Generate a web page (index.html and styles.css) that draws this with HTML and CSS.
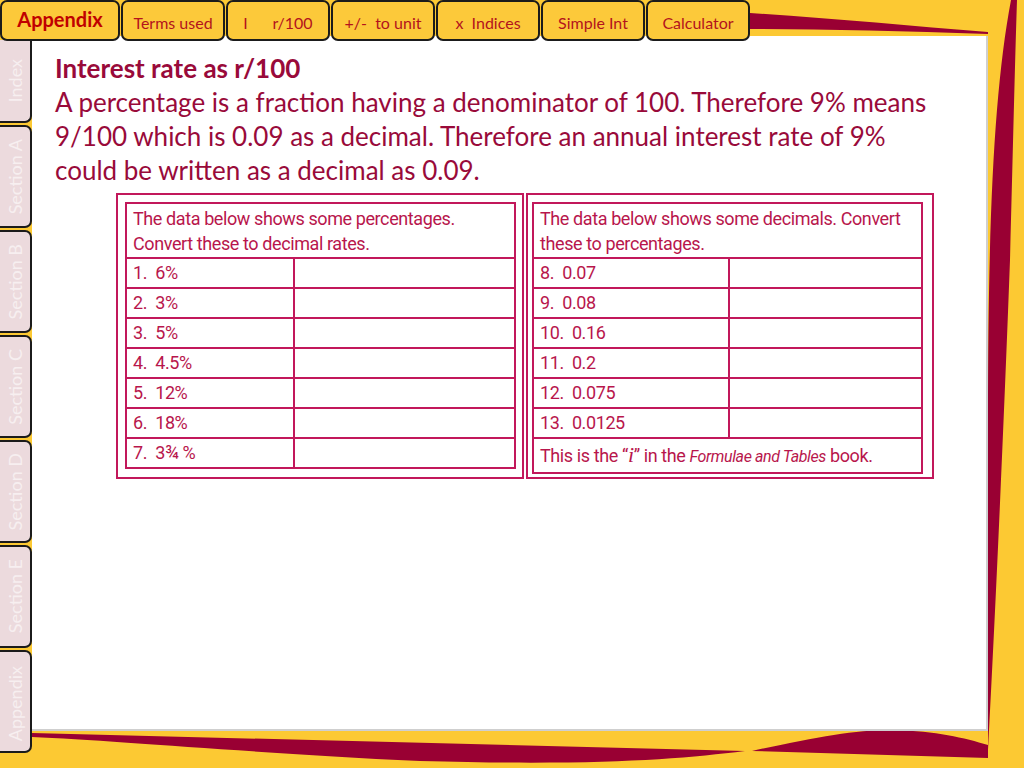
FILE: index.html
```html
<!DOCTYPE html>
<html>
<head>
<meta charset="utf-8">
<title>Interest rate as r/100</title>
<link rel="stylesheet" href="styles.css">
</head>
<body>
<div class="page">
  <svg class="deco" width="1024" height="768" viewBox="0 0 1024 768" aria-hidden="true">
    <path d="M750,13 C830,18 910,26 988,32 L988,34 C900,31 820,29 750,29 Z" fill="#990033"/>
    <path d="M1011,0 C994,90 988,220 988,420 L988,750 C996,600 1004,420 1010,260 C1013,150 1015,60 1017,0 Z" fill="#990033"/>
    <path d="M32,733 L745,751 C680,759 600,766 420,761 C250,753 110,740 32,737 Z" fill="#990033"/>
    <path d="M752,751 C815,737 860,729 895,730 C935,731 965,738 988,745 L988,758 Z" fill="#990033"/>
  </svg>

  <nav class="toptabs">
    <div class="ttab main">Appendix</div>
    <div class="ttab">Terms used</div>
    <div class="ttab pre">I      r/100</div>
    <div class="ttab pre">+/-  to unit</div>
    <div class="ttab pre">x  Indices</div>
    <div class="ttab">Simple Int</div>
    <div class="ttab">Calculator</div>
  </nav>

  <div class="body">
    <aside class="sidetabs">
      <div class="stab s1"><span>Index</span></div>
      <div class="stab"><span>Section A</span></div>
      <div class="stab"><span>Section B</span></div>
      <div class="stab"><span>Section C</span></div>
      <div class="stab"><span>Section D</span></div>
      <div class="stab"><span>Section E</span></div>
      <div class="stab last"><span>Appendix</span></div>
    </aside>

    <main class="panel">
      <h1 class="title">Interest rate as r/100</h1>
      <p class="text">A percentage is a fraction having a denominator of 100. Therefore 9% means 9/100 which is 0.09 as a decimal. Therefore an annual interest rate of 9% could be written as a decimal as 0.09.</p>

      <div class="tables">
        <div class="frame left">
          <table class="grid">
            <tr class="hdr"><td colspan="2">The data below shows some percentages.<br>Convert these to decimal rates.</td></tr>
            <tr><td class="q">1.&nbsp; 6%</td><td></td></tr>
            <tr><td class="q">2.&nbsp; 3%</td><td></td></tr>
            <tr><td class="q">3.&nbsp; 5%</td><td></td></tr>
            <tr><td class="q">4.&nbsp; 4.5%</td><td></td></tr>
            <tr><td class="q">5.&nbsp; 12%</td><td></td></tr>
            <tr><td class="q">6.&nbsp; 18%</td><td></td></tr>
            <tr><td class="q">7.&nbsp; 3¾ %</td><td></td></tr>
          </table>
        </div>
        <div class="frame right">
          <table class="grid">
            <tr class="hdr"><td colspan="2">The data below shows some decimals. Convert<br>these to percentages.</td></tr>
            <tr><td class="q">8.&nbsp; 0.07</td><td></td></tr>
            <tr><td class="q">9.&nbsp; 0.08</td><td></td></tr>
            <tr><td class="q">10.&nbsp; 0.16</td><td></td></tr>
            <tr><td class="q">11.&nbsp; 0.2</td><td></td></tr>
            <tr><td class="q">12.&nbsp; 0.075</td><td></td></tr>
            <tr><td class="q">13.&nbsp; 0.0125</td><td></td></tr>
            <tr class="foot"><td colspan="2">This is the “<i class="ivar">i</i>” in the <em>Formulae and Tables</em> book.</td></tr>
          </table>
        </div>
      </div>
    </main>
  </div>
</div>
</body>
</html>
```

FILE: styles.css
```css
* { box-sizing: border-box; }
html, body { margin: 0; padding: 0; }
body { background: #fcc933; font-family: Lato, "Open Sans", sans-serif; }

.page {
  position: relative;
  width: 1024px;
  height: 768px;
  overflow: hidden;
  background: #fcc933;
}

.deco { position: absolute; left: 0; top: 0; z-index: 0; }

.toptabs {
  position: relative;
  z-index: 2;
  display: flex;
  gap: 1px;
  height: 41px;
  width: 750px;
}
.ttab {
  width: 104px;
  height: 41px;
  background: #fcc93a;
  border: 2px solid #1b1b1b;
  border-radius: 7px;
  display: flex;
  align-items: center;
  justify-content: center;
  font-size: 16px;
  color: #b3131d;
  padding-top: 3px;
}
.ttab.main {
  width: 120px;
  font-weight: bold;
  font-size: 20px;
  padding-top: 0;
  padding-bottom: 4px;
  color: #c00000;
}
.ttab.pre { white-space: pre; }

.body {
  position: relative;
  z-index: 1;
  display: flex;
  margin-top: -5px;
}

.sidetabs {
  display: flex;
  flex-direction: column;
  gap: 2px;
  width: 32px;
  padding-top: 4px;
  position: relative;
  z-index: 2;
}
.stab {
  height: 103px;
  background: #ecdadd;
  border: 2px solid #1b1b1b;
  border-left: none;
  border-radius: 0 7px 7px 0;
  display: flex;
  align-items: center;
  justify-content: center;
  overflow: hidden;
}
.stab.s1 { height: 83px; border-top: none; border-radius: 0 0 7px 0; }
.stab.last { align-items: flex-end; padding-bottom: 10px; }
.stab span {
  writing-mode: vertical-rl;
  transform: rotate(180deg);
  color: #f7eff0;
  font-size: 18px;
  white-space: nowrap;
  margin-left: -1px;
}

.panel {
  width: 956px;
  height: 695px;
  background: #ffffff;
  border-right: 2px solid #cfcfcf;
  border-bottom: 2px solid #cfcfcf;
  padding: 15px 0 0 23px;
  color: #990a3a;
}
.title {
  margin: 0;
  font-size: 26px;
  line-height: 34px;
  font-weight: bold;
}
.text {
  margin: 0;
  font-size: 26px;
  line-height: 34px;
  width: 880px;
}

.tables {
  display: flex;
  gap: 2px;
  margin: 6px 0 0 61px;
}
.frame {
  border: 2px solid #c2185b;
  height: 286px;
  width: 408px;
}
.frame.left { padding: 7px 6px 0 7px; }
.frame.right { padding: 7px 9px 0 4px; }

.grid {
  border-collapse: collapse;
  width: 100%;
  font-family: Roboto, "Liberation Sans", sans-serif;
  color: #b8164c;
  font-size: 18px;
  letter-spacing: -0.4px;
}
.grid td {
  border: 2px solid #c2185b;
  height: 30px;
  padding: 0 6px;
  line-height: 22px;
  vertical-align: middle;
  white-space: nowrap;
}
.left .grid td.q { width: 168px; }
.right .grid td.q { width: 196px; }
.grid tr.hdr td { height: 55px; line-height: 25px; padding-top: 1px; }
.grid tr.foot td { height: 35px; }
.ivar { font-family: "Liberation Serif", serif; font-style: italic; font-size: 22px; }
.grid em { font-style: italic; font-size: 16px; }
```
